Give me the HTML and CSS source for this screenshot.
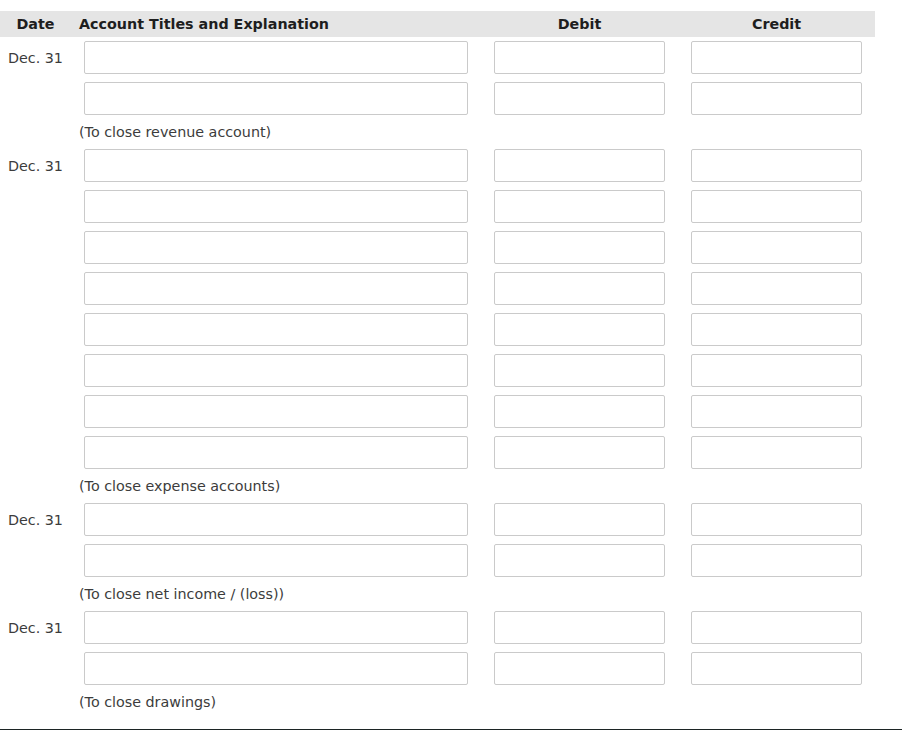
FILE: index.html
```html
<!DOCTYPE html>
<html>
<head>
<meta charset="utf-8">
<link rel="stylesheet" href="styles.css">
</head>
<body>
<div class="journal">
  <div class="row head">
    <div class="c-date">Date</div>
    <div class="c-acct">Account Titles and Explanation</div>
    <div class="c-num">Debit</div>
    <div class="c-num">Credit</div>
  </div>

  <div class="row"><div class="c-date">Dec. 31</div><div class="c-acct"><input class="box wide"></div><div class="c-num"><input class="box"></div><div class="c-num"><input class="box"></div></div>
  <div class="row"><div class="c-date"></div><div class="c-acct"><input class="box wide"></div><div class="c-num"><input class="box"></div><div class="c-num"><input class="box"></div></div>
  <div class="note">(To close revenue account)</div>

  <div class="row"><div class="c-date">Dec. 31</div><div class="c-acct"><input class="box wide"></div><div class="c-num"><input class="box"></div><div class="c-num"><input class="box"></div></div>
  <div class="row"><div class="c-date"></div><div class="c-acct"><input class="box wide"></div><div class="c-num"><input class="box"></div><div class="c-num"><input class="box"></div></div>
  <div class="row"><div class="c-date"></div><div class="c-acct"><input class="box wide"></div><div class="c-num"><input class="box"></div><div class="c-num"><input class="box"></div></div>
  <div class="row"><div class="c-date"></div><div class="c-acct"><input class="box wide"></div><div class="c-num"><input class="box"></div><div class="c-num"><input class="box"></div></div>
  <div class="row"><div class="c-date"></div><div class="c-acct"><input class="box wide"></div><div class="c-num"><input class="box"></div><div class="c-num"><input class="box"></div></div>
  <div class="row"><div class="c-date"></div><div class="c-acct"><input class="box wide"></div><div class="c-num"><input class="box"></div><div class="c-num"><input class="box"></div></div>
  <div class="row"><div class="c-date"></div><div class="c-acct"><input class="box wide"></div><div class="c-num"><input class="box"></div><div class="c-num"><input class="box"></div></div>
  <div class="row"><div class="c-date"></div><div class="c-acct"><input class="box wide"></div><div class="c-num"><input class="box"></div><div class="c-num"><input class="box"></div></div>
  <div class="note">(To close expense accounts)</div>

  <div class="row"><div class="c-date">Dec. 31</div><div class="c-acct"><input class="box wide"></div><div class="c-num"><input class="box"></div><div class="c-num"><input class="box"></div></div>
  <div class="row"><div class="c-date"></div><div class="c-acct"><input class="box wide"></div><div class="c-num"><input class="box"></div><div class="c-num"><input class="box"></div></div>
  <div class="note">(To close net income / (loss))</div>

  <div class="row"><div class="c-date">Dec. 31</div><div class="c-acct"><input class="box wide"></div><div class="c-num"><input class="box"></div><div class="c-num"><input class="box"></div></div>
  <div class="row"><div class="c-date"></div><div class="c-acct"><input class="box wide"></div><div class="c-num"><input class="box"></div><div class="c-num"><input class="box"></div></div>
  <div class="note">(To close drawings)</div>
</div>
<div class="rule"></div>
</body>
</html>
```

FILE: styles.css
```css
html, body {
  margin: 0;
  padding: 0;
  background: #fff;
}
body {
  font-family: "DejaVu Sans", Verdana, sans-serif;
  font-size: 14.3px;
  color: #3c3c3c;
}
.journal {
  width: 875px;
  padding-top: 11px;
}
.row {
  display: grid;
  grid-template-columns: 71px 410px 197px 197px;
  align-items: center;
  height: 41px;
}
.row.head {
  height: 26px;
  background: #e5e5e5;
  font-weight: bold;
  color: #1e1e1e;
}
.c-date {
  text-align: center;
}
.head .c-acct {
  padding-left: 8px;
}
.c-acct {
  padding-left: 13px;
}
.c-num {
  text-align: center;
}
.box {
  display: block;
  box-sizing: border-box;
  height: 33px;
  width: 171px;
  margin: 0 auto;
  border: 1px solid #cacaca;
  border-radius: 2px;
  background: #fff;
  padding: 0 6px;
  font: inherit;
}
.box.wide {
  width: 384px;
  margin: 0;
}
.note {
  height: 26px;
  line-height: 26px;
  padding-left: 79px;
}
.rule {
  margin-top: 14px;
  height: 0;
  border-top: 1px solid #1c2424;
}
```
